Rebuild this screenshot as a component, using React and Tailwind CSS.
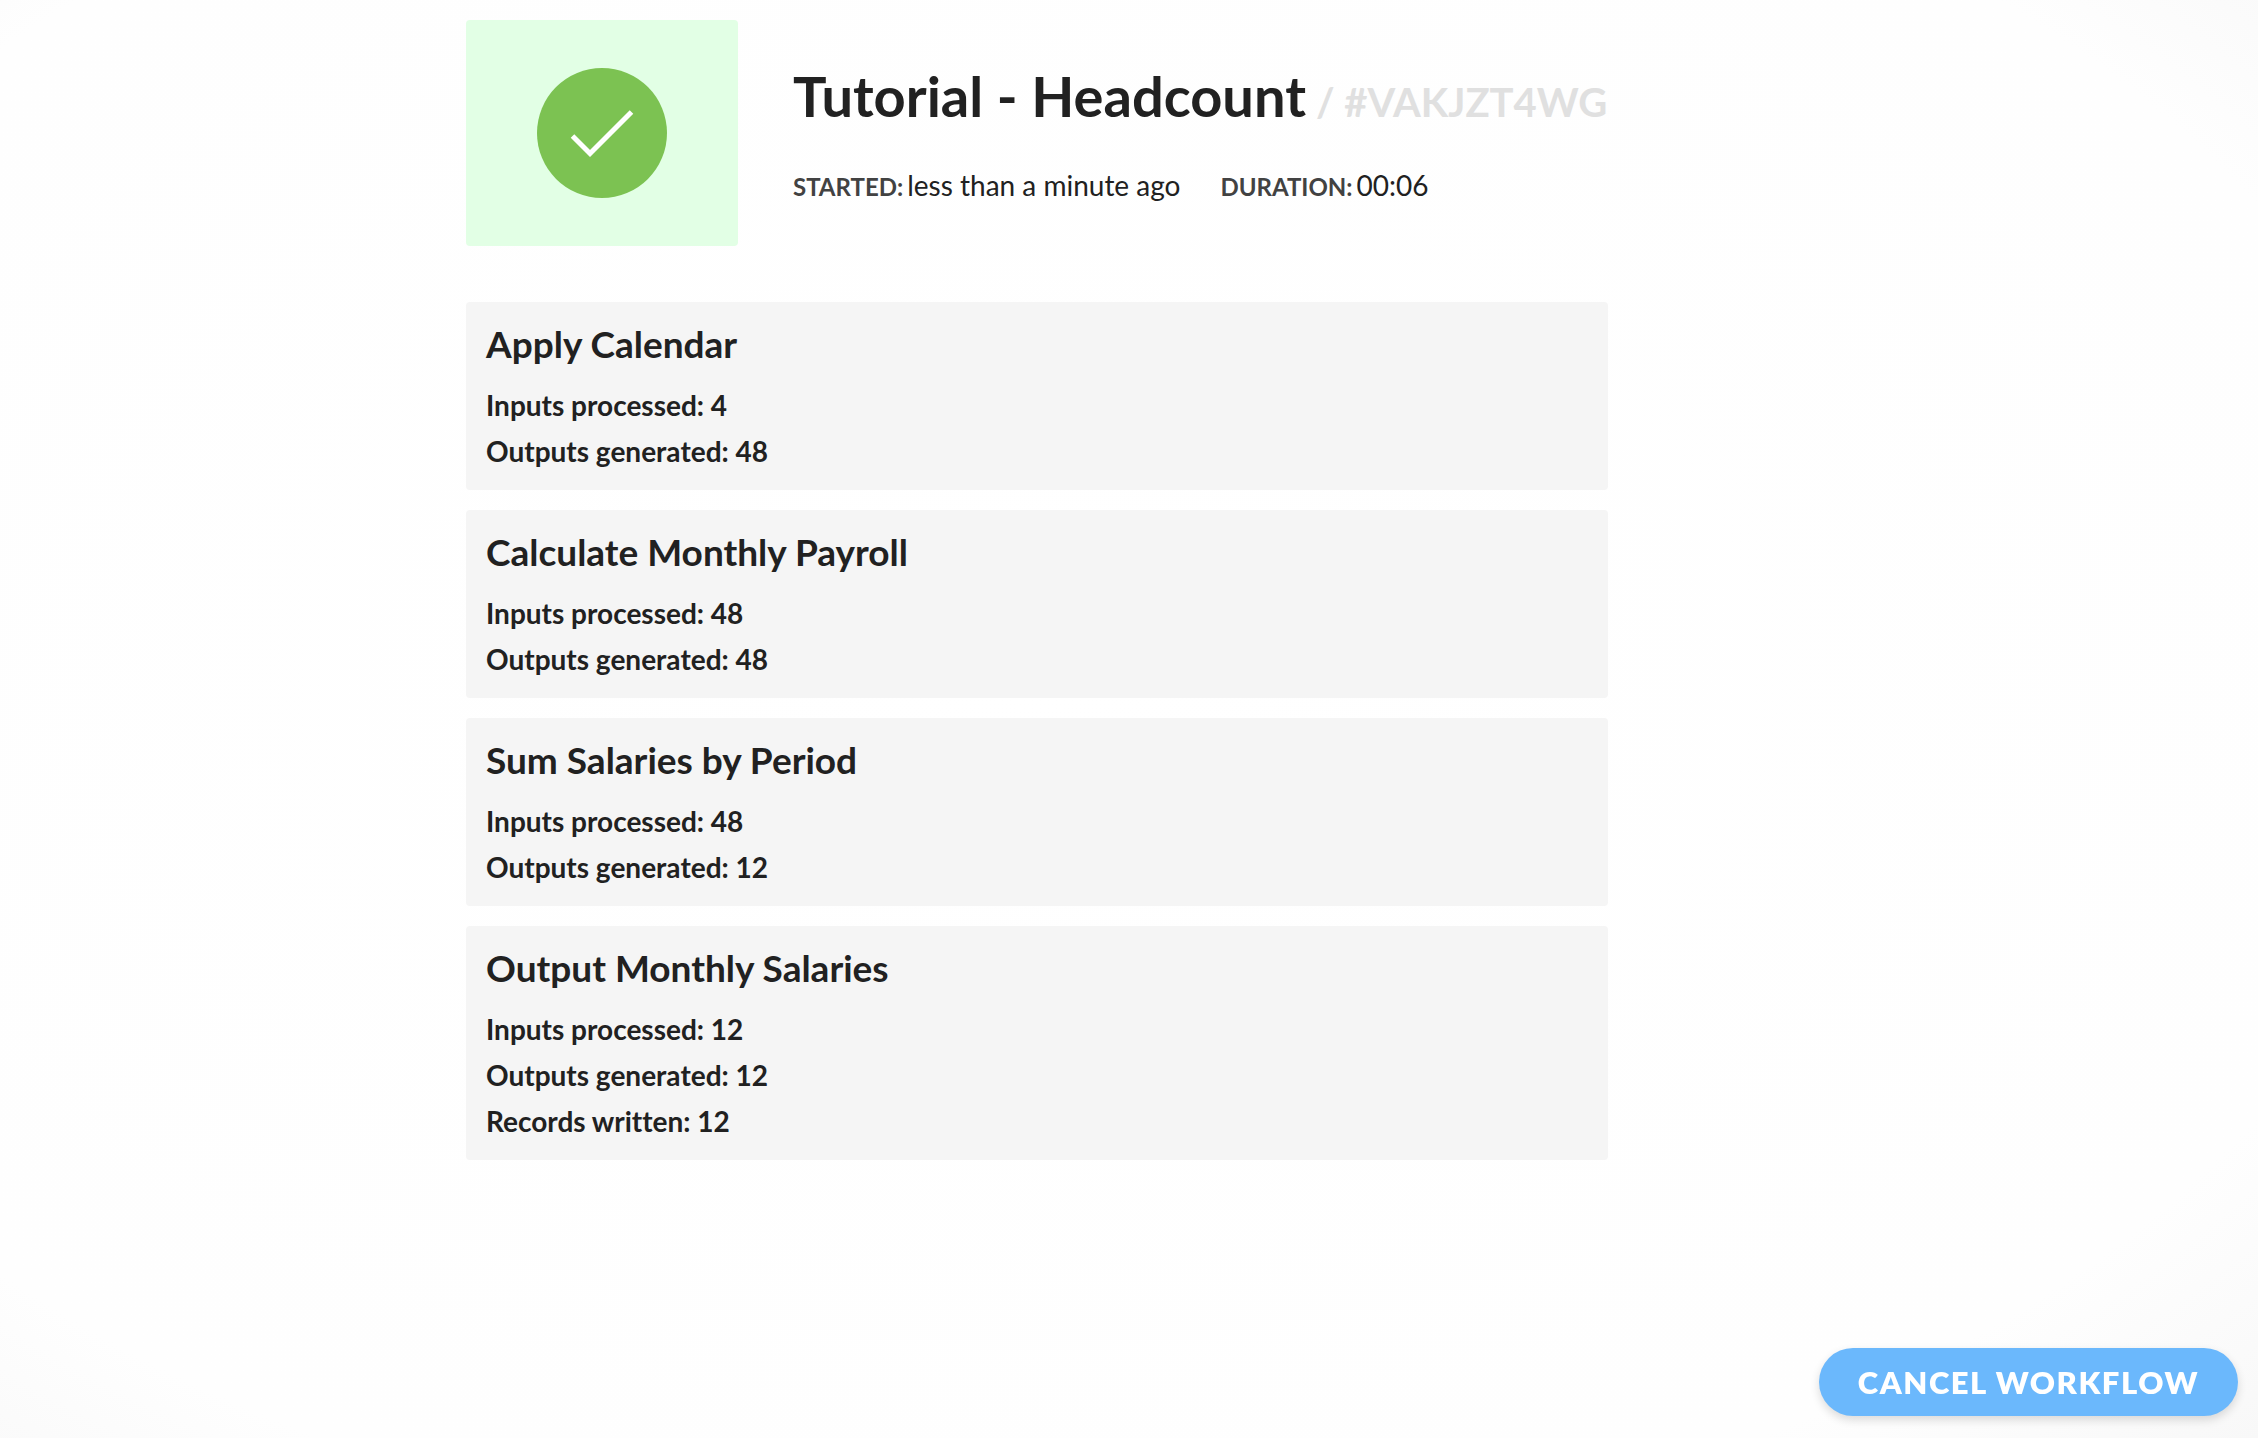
import React from "react";

const STEPS = [
  {
    name: "Apply Calendar",
    stats: [
      { label: "Inputs processed", value: 4 },
      { label: "Outputs generated", value: 48 },
    ],
  },
  {
    name: "Calculate Monthly Payroll",
    stats: [
      { label: "Inputs processed", value: 48 },
      { label: "Outputs generated", value: 48 },
    ],
  },
  {
    name: "Sum Salaries by Period",
    stats: [
      { label: "Inputs processed", value: 48 },
      { label: "Outputs generated", value: 12 },
    ],
  },
  {
    name: "Output Monthly Salaries",
    stats: [
      { label: "Inputs processed", value: 12 },
      { label: "Outputs generated", value: 12 },
      { label: "Records written", value: 12 },
    ],
  },
];

const SuccessIcon = () => (
  <svg viewBox="0 0 130 130" className="size-[130px]" aria-hidden="true">
    <circle cx="65" cy="65" r="65" fill="#7cc252" />
    <path
      d="M35.5 68 53 85.5 94.5 44"
      fill="none"
      stroke="#fff"
      strokeWidth="5"
    />
  </svg>
);

const Meta = ({ label, children }) => (
  <div className="flex items-baseline gap-1 text-[28px] leading-9">
    <dt className="text-2xl leading-9 font-bold uppercase text-[#424242]">
      {label}:
    </dt>
    <dd>{children}</dd>
  </div>
);

const StepCard = ({ step }) => (
  <section className="rounded bg-[#f5f5f5] px-5 pt-5 pb-[21px] font-bold">
    <h2 className="mb-[21px] text-[37px] leading-11">{step.name}</h2>
    <ul className="flex flex-col gap-2.5 text-[28px] leading-9 [font-variant-ligatures:none]">
      {step.stats.map((stat) => (
        <li key={stat.label}>
          {stat.label}: {stat.value}
        </li>
      ))}
    </ul>
  </section>
);

const App = () => (
  <div className="min-h-screen bg-[radial-gradient(ellipse_at_46%_46%,#ffffff_0%,#fefefe_82%,#f8f8f8_100%)] px-5 py-5 font-[Lato,sans-serif] text-[#212121]">
    <main className="mx-auto max-w-[1326px]">
      <div className="max-w-[1142px]">
        <header className="mb-14 flex items-center gap-[55px]">
          <div className="flex h-[226px] w-[272px] shrink-0 items-center justify-center rounded bg-[#e2ffe5]">
            <SuccessIcon />
          </div>
          <div className="flex flex-col gap-9">
            <h1 className="flex flex-wrap items-baseline gap-x-2.5 text-[56px] leading-[70px] font-bold">
              Tutorial - Headcount
              <small className="text-[40px] leading-none text-[#e0e0e0]">
                / #VAKJZT4WG
              </small>
            </h1>
            <dl className="flex gap-10">
              <Meta label="Started">less than a minute ago</Meta>
              <Meta label="Duration">00:06</Meta>
            </dl>
          </div>
        </header>

        <div className="flex flex-col gap-5">
          {STEPS.map((step) => (
            <StepCard key={step.name} step={step} />
          ))}
        </div>
      </div>
    </main>

    <button
      type="button"
      className="fixed right-5 bottom-[22px] h-[68px] rounded-full bg-[#6bb8fc] px-[39px] text-[31px] font-extrabold tracking-wider text-white uppercase shadow-[0_4px_10px_rgba(0,0,0,0.14)]"
    >
      Cancel workflow
    </button>
  </div>
);

export default App;
